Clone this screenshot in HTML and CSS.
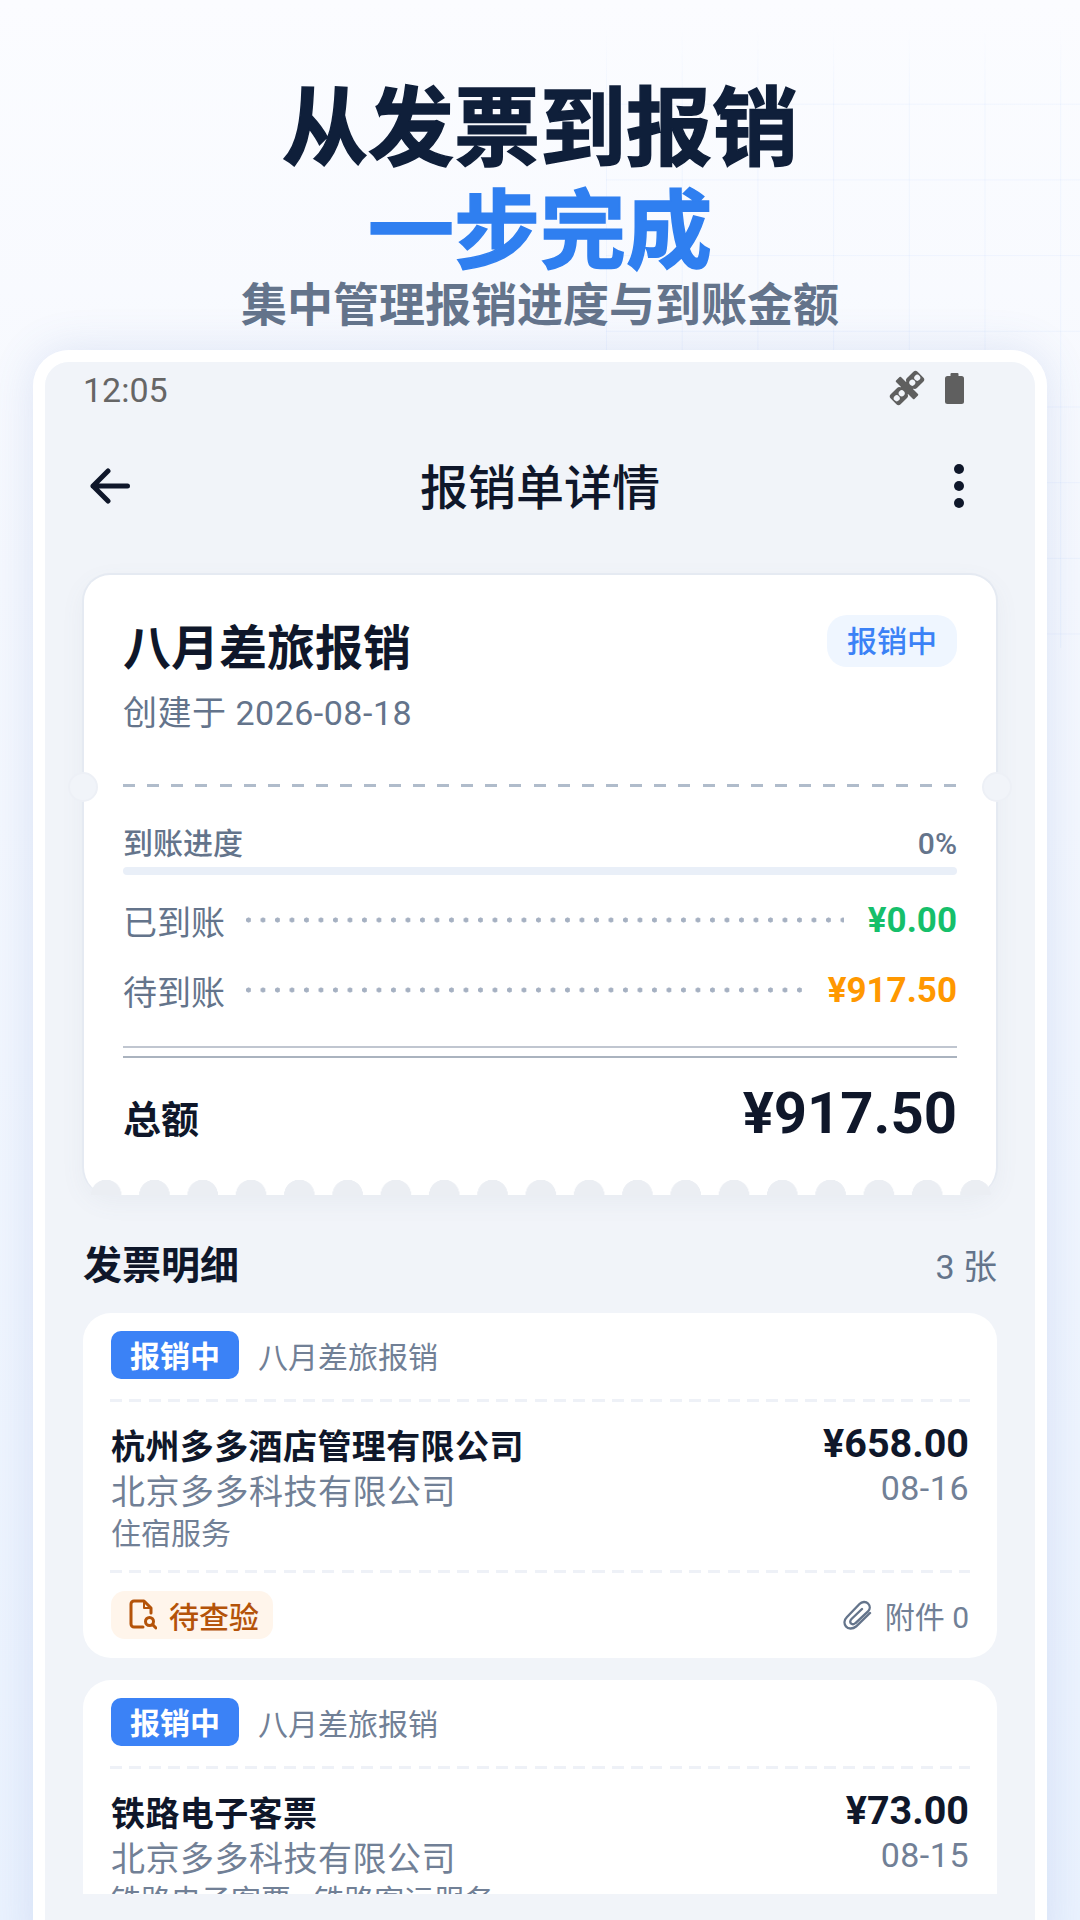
FILE: index.html
```html
<!DOCTYPE html>
<html lang="zh-CN">
<head>
    <meta charset="UTF-8">
    <meta name="viewport" content="width=device-width, initial-scale=1.0">
    <title>从发票到报销</title>
    <link rel="stylesheet" href="styles.css">
</head>
<body>

    <header class="hero">
        <h1 class="hero-title">从发票到报销</h1>
        <h1 class="hero-title hero-accent">一步完成</h1>
        <p class="hero-sub">集中管理报销进度与到账金额</p>
    </header>

    <div class="phone">
        <div class="screen">
            <div class="status-bar">
                <span class="status-time">12:05</span>
                <div class="status-icons">
                    <svg class="icon-sat" width="40" height="40" viewBox="0 0 40 40">
                        <g transform="rotate(-45 20 20)" fill="#5f5f5f">
                            <rect x="1" y="13" width="15" height="14" rx="3"/>
                            <rect x="24" y="13" width="15" height="14" rx="3"/>
                            <rect x="16.500" y="7" width="7" height="26" rx="1"/>
                            <rect x="14" y="15" width="12" height="10"/>
                            <circle cx="5.500" cy="20" r="3" fill="#f1f4f9"/>
                            <circle cx="12.500" cy="20" r="3" fill="#f1f4f9"/>
                            <circle cx="27.500" cy="20" r="3" fill="#f1f4f9"/>
                            <circle cx="34.500" cy="20" r="3" fill="#f1f4f9"/>
                        </g>
                    </svg>
                    <svg width="19" height="31" viewBox="0 0 19 31" fill="#5f5f5f">
                        <rect x="5.500" y="0" width="8" height="5" rx="1"/>
                        <rect x="0" y="3" width="19" height="28" rx="2.500"/>
                    </svg>
                </div>
            </div>

            <div class="app-bar">
                <svg width="40" height="36" viewBox="0 0 40 36" fill="none" stroke="#0f172a" stroke-width="5" stroke-linecap="round" stroke-linejoin="round">
                    <path d="M37.500 18H3M18 3 3 18 18 33"/>
                </svg>
                <span class="app-title">报销单详情</span>
                <div class="more-dots"><i></i><i></i><i></i></div>
            </div>

            <div class="scroll">
                <section class="ticket">
                    <span class="notch notch-left"></span>
                    <span class="notch notch-right"></span>
                    <div class="ticket-head">
                        <div>
                            <div class="ticket-title">八月差旅报销</div>
                            <div class="ticket-date">创建于 2026-08-18</div>
                        </div>
                        <span class="ticket-badge">报销中</span>
                    </div>
                    <div class="ticket-dash"></div>
                    <div class="progress-head">
                        <span>到账进度</span>
                        <span class="progress-num">0%</span>
                    </div>
                    <div class="progress-bar"></div>
                    <div class="money-row first">
                        <span class="money-label">已到账</span>
                        <span class="money-dots"></span>
                        <span class="money-val green">¥0.00</span>
                    </div>
                    <div class="money-row">
                        <span class="money-label">待到账</span>
                        <span class="money-dots"></span>
                        <span class="money-val orange">¥917.50</span>
                    </div>
                    <div class="double-line"></div>
                    <div class="total-row">
                        <span class="total-label">总额</span>
                        <span class="total-val">¥917.50</span>
                    </div>
                    <div class="scallops"></div>
                </section>

                <div class="section-head">
                    <span class="section-title">发票明细</span>
                    <span class="section-count">3 张</span>
                </div>

                <article class="invoice">
                    <div class="invoice-top">
                        <span class="tag">报销中</span>
                        <span class="invoice-batch">八月差旅报销</span>
                    </div>
                    <div class="invoice-dash"></div>
                    <div class="invoice-body">
                        <div>
                            <div class="invoice-name">杭州多多酒店管理有限公司</div>
                            <div class="invoice-buyer">北京多多科技有限公司</div>
                            <div class="invoice-type">住宿服务</div>
                        </div>
                        <div class="invoice-right">
                            <div class="invoice-amount">¥658.00</div>
                            <div class="invoice-day">08-16</div>
                        </div>
                    </div>
                    <div class="invoice-dash lower"></div>
                    <div class="invoice-foot">
                        <span class="chip">
                            <svg width="28" height="32" viewBox="0 0 28 32" fill="none" stroke="#b45309" stroke-width="3" stroke-linecap="round" stroke-linejoin="round">
                                <path d="M14 28H5a3 3 0 0 1-3-3V5a3 3 0 0 1 3-3h10l7 7v5"/>
                                <path d="M15 2v7h7" stroke-width="2"/>
                                <circle cx="20.500" cy="22.500" r="4"/>
                                <path d="M23.600 25.600 27 29"/>
                            </svg>
                            待查验
                        </span>
                        <span class="attach">
                            <svg width="29" height="30" viewBox="0 0 29 30" fill="none" stroke="#64748b" stroke-width="2.400" stroke-linecap="round">
                                <path d="M27 13 13 26.500c-3.500 3-8 2.500-10 0-2.500-3-1.500-7 1-9.500L16.500 4c2.500-2.500 6.500-2.500 8.500-.5 2.500 2.500 2 6 0 8L12.500 23c-1.500 1.500-3.500 1.500-4.500.5s-1-3 .5-4.500L19 9"/>
                            </svg>
                            附件 0
                        </span>
                    </div>
                </article>

                <article class="invoice">
                    <div class="invoice-top">
                        <span class="tag">报销中</span>
                        <span class="invoice-batch">八月差旅报销</span>
                    </div>
                    <div class="invoice-dash"></div>
                    <div class="invoice-body">
                        <div>
                            <div class="invoice-name">铁路电子客票</div>
                            <div class="invoice-buyer">北京多多科技有限公司</div>
                            <div class="invoice-type">铁路电子客票 - 铁路客运服务</div>
                        </div>
                        <div class="invoice-right">
                            <div class="invoice-amount">¥73.00</div>
                            <div class="invoice-day">08-15</div>
                        </div>
                    </div>
                </article>
            </div>
        </div>
    </div>

</body>
</html>
```

FILE: styles.css
```css
/* General Styles */
* {
    box-sizing: border-box;
}

body {
    position: relative;
    width: 1080px;
    height: 1920px;
    margin: 0;
    overflow: hidden;
    font-family: Roboto, 'Noto Sans CJK SC', sans-serif;
    color: #0f172a;
    background: linear-gradient(180deg, #fbfcff 0%, #f5f8fe 30%, #eaf2fe 100%);
}

/* faint grid behind the hero */
body::before {
    content: '';
    position: absolute;
    left: 606px;
    top: 28px;
    width: 474px;
    height: 620px;
    background-image:
        linear-gradient(to right, rgba(59, 130, 246, 0.05) 1px, transparent 1px),
        linear-gradient(to bottom, rgba(59, 130, 246, 0.05) 1px, transparent 1px);
    background-size: 75.7px 75.7px;
    -webkit-mask-image: linear-gradient(to bottom, transparent 0, #000 70px);
    mask-image: linear-gradient(to bottom, transparent 0, #000 70px);
}

/* Hero */
.hero {
    position: relative;
    padding-top: 78px;
    text-align: center;
}

.hero-title {
    margin: 0;
    font-size: 86px;
    line-height: 103px;
    font-weight: 700;
    -webkit-text-stroke: 1.5px currentColor;
    color: #0f1f3a;
}

.hero-accent {
    color: #2f7ff0;
}

.hero-sub {
    margin: -4px 0 0;
    font-size: 46px;
    line-height: 50px;
    font-weight: 700;
    color: #64748b;
}

/* Phone frame */
.phone {
    position: relative;
    margin: 20px 33px 0;
    border: 12px solid #fff;
    border-bottom: 0;
    border-radius: 36px 36px 0 0;
    height: 1600px;
    box-shadow: 0 0 44px rgba(90, 120, 190, 0.16);
}

.screen {
    height: 100%;
    border-radius: 24px 24px 0 0;
    background: #f1f4f9;
}

.status-bar {
    display: flex;
    justify-content: space-between;
    align-items: center;
    height: 52px;
    padding: 0 71px 0 38px;
}

.status-time {
    padding-top: 4px;
    font-size: 34px;
    color: #666;
}

.status-icons {
    display: flex;
    align-items: center;
    gap: 18px;
}

.app-bar {
    display: flex;
    justify-content: space-between;
    align-items: center;
    height: 144px;
    padding: 0 71px 0 45px;
}

.app-title {
    margin-right: 4px;
    padding-bottom: 4px;
    font-size: 48px;
    font-weight: 500;
}

.more-dots {
    display: flex;
    flex-direction: column;
    gap: 7px;
}

.more-dots i {
    width: 10px;
    height: 10px;
    border-radius: 50%;
    background: #0f172a;
}

.scroll {
    height: 1336px;
    overflow: hidden;
    padding: 15px 38px 0;
}

/* Summary ticket */
.ticket {
    position: relative;
    height: 622px;
    margin: 0 -1px;
    padding: 40px 39px 0;
    background: #fff;
    border: 2px solid #e5eaf2;
    border-bottom: 0;
    border-radius: 28px;
    box-shadow: 0 8px 24px rgba(100, 116, 139, 0.06);
}

.notch {
    position: absolute;
    top: 197px;
    width: 30px;
    height: 30px;
    border-radius: 50%;
    background: #f1f4f9;
    border: 2px solid #edf0f6;
}

.notch-left {
    left: -16px;
}

.notch-right {
    right: -16px;
}

.ticket-head {
    display: flex;
    justify-content: space-between;
    align-items: flex-start;
}

.ticket-title {
    font-size: 48px;
    line-height: 68px;
    font-weight: 700;
}

.ticket-date {
    margin-top: 8px;
    font-size: 34px;
    line-height: 44px;
    letter-spacing: 0.5px;
    color: #64748b;
}

.ticket-badge {
    padding: 2px 20px 0;
    font-size: 30px;
    line-height: 50px;
    font-weight: 500;
    border-radius: 20px;
    color: #3b82f6;
    background: #eff6ff;
}

.ticket-dash {
    height: 3px;
    margin-top: 49px;
    background: repeating-linear-gradient(to right, #b0bccb 0 12px, transparent 12px 24.150px);
}

.progress-head {
    display: flex;
    justify-content: space-between;
    margin-top: 37px;
    font-size: 30px;
    line-height: 40px;
    font-weight: 500;
    color: #64748b;
}

.progress-num {
    font-size: 30px;
}

.progress-bar {
    height: 8px;
    margin-top: 3px;
    border-radius: 4px;
    background: #e9eff8;
}

.money-row {
    display: flex;
    align-items: center;
    margin-top: 22px;
    height: 48px;
}

.money-row.first {
    margin-top: 21px;
}

.money-label {
    font-size: 34px;
    color: #64748b;
}

.money-dots {
    flex: 1;
    height: 6px;
    margin: 0 24px 0 21px;
    background: radial-gradient(circle at 2.500px 3px, #a6b1c2 2.300px, transparent 2.800px) 0 0 / 14.500px 6px repeat-x;
}

.money-val {
    font-size: 35px;
    font-weight: 700;
}

.green {
    color: #16bf6b;
}

.orange {
    color: #ff9800;
}

.double-line {
    height: 12px;
    margin-top: 32px;
    border-top: 2px solid #c0c6d0;
    border-bottom: 2px solid #aab3bf;
}

.total-row {
    display: flex;
    justify-content: space-between;
    align-items: center;
    height: 90px;
    margin-top: 10px;
}

.total-label {
    font-size: 38px;
    font-weight: 700;
    padding-top: 6px;
}

.total-val {
    font-size: 58px;
    font-weight: 700;
}

.scallops {
    position: absolute;
    left: -2px;
    right: 5px;
    bottom: 0;
    height: 15px;
    background: radial-gradient(circle at 50% 100%, #ebeef3 15px, transparent 15.500px) 0 0 / 48.300px 15px repeat-x;
}

/* Invoice list */
.section-head {
    display: flex;
    justify-content: space-between;
    align-items: center;
    height: 40px;
    margin-top: 49px;
}

.section-title {
    padding-bottom: 4px;
    font-size: 39px;
    font-weight: 700;
}

.section-count {
    font-size: 34px;
    color: #64748b;
}

.invoice {
    margin-top: 29px;
    padding: 18px 28px 19px;
    background: #fff;
    border-radius: 28px;
}

.invoice + .invoice {
    margin-top: 22px;
}

.invoice-top {
    display: flex;
    align-items: center;
    gap: 19px;
}

.tag {
    padding: 3px 19px 0;
    font-size: 30px;
    line-height: 45px;
    font-weight: 700;
    border-radius: 10px;
    color: #fff;
    background: #3b82f6;
}

.invoice-batch {
    font-size: 30px;
    color: #718096;
}

.invoice-dash {
    height: 3px;
    margin: 20px -1px 0;
    background: repeating-linear-gradient(to right, #eef1f7 0 12px, transparent 12px 19.300px);
}

.invoice-dash.lower {
    margin-top: 16px;
}

.invoice-body {
    display: flex;
    justify-content: space-between;
    margin-top: 23px;
}

.invoice-name {
    font-size: 34px;
    line-height: 44px;
    letter-spacing: 0.4px;
    font-weight: 700;
}

.invoice-buyer {
    margin-top: 1px;
    font-size: 34px;
    line-height: 44px;
    letter-spacing: 0.5px;
    color: #718096;
}

.invoice-type {
    font-size: 30px;
    line-height: 40px;
    color: #718096;
}

.invoice-right {
    margin-top: -3px;
    text-align: right;
}

.invoice-amount {
    font-size: 39.500px;
    line-height: 44px;
    font-weight: 700;
}

.invoice-day {
    font-size: 34px;
    line-height: 44px;
    letter-spacing: 0.5px;
    color: #718096;
}

.invoice-foot {
    display: flex;
    justify-content: space-between;
    align-items: center;
    margin-top: 18px;
}

.chip {
    display: flex;
    align-items: center;
    gap: 12px;
    height: 48px;
    padding: 0 14px 0 18px;
    font-size: 30px;
    font-weight: 500;
    border-radius: 14px;
    color: #b45309;
    background: #fff5eb;
}

.attach {
    display: flex;
    align-items: center;
    gap: 13px;
    font-size: 30px;
    color: #718096;
}
```
